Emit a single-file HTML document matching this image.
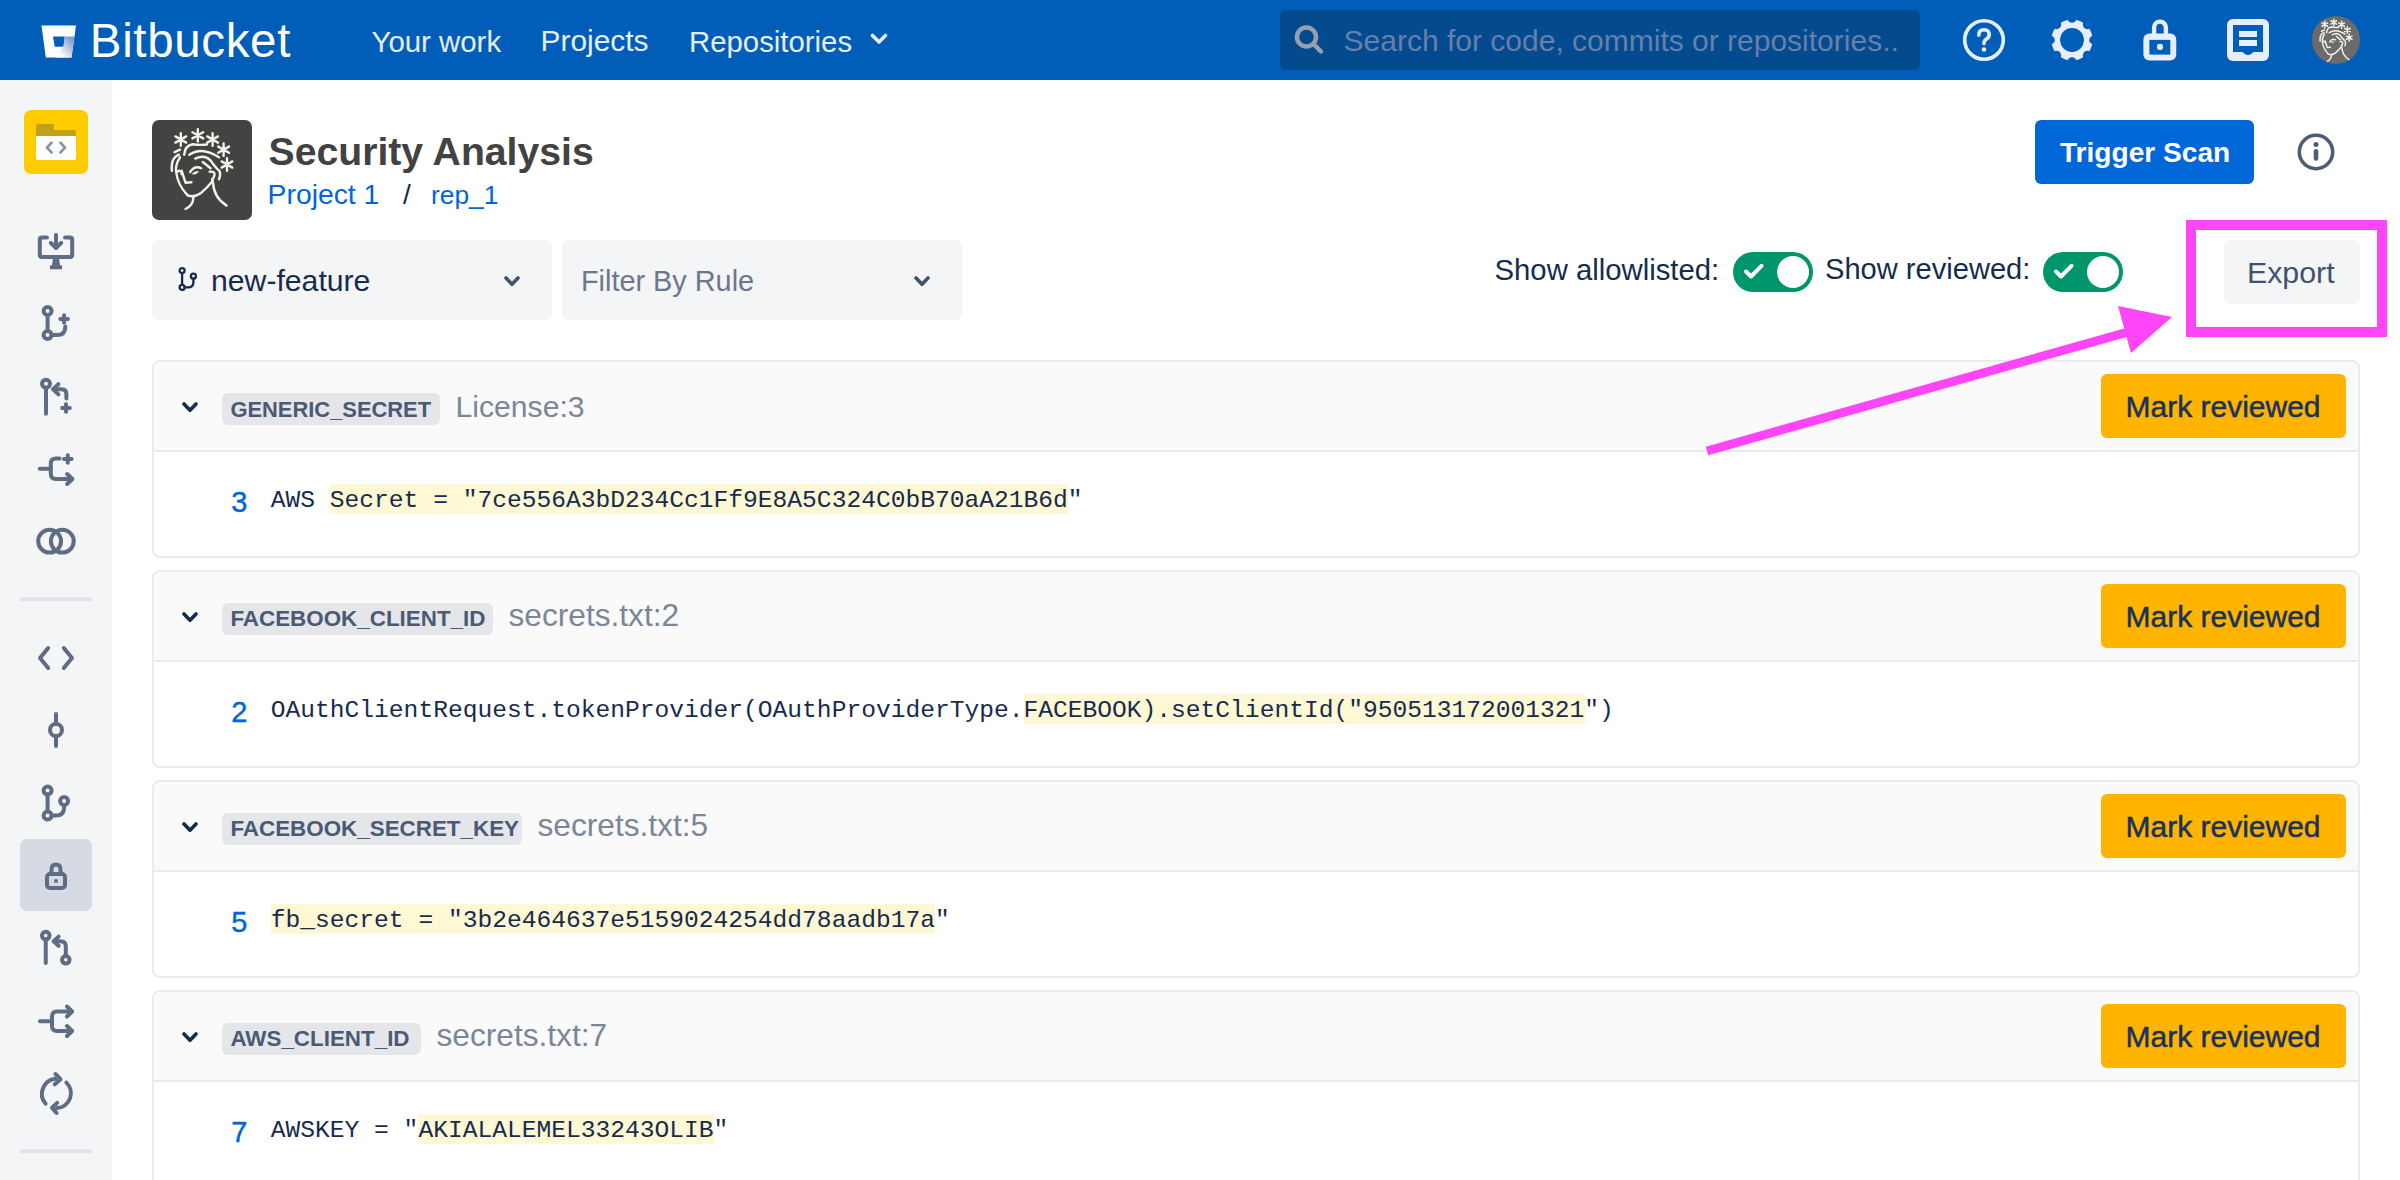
<!DOCTYPE html>
<html><head><meta charset="utf-8"><style>
html,body{margin:0;padding:0;width:2400px;height:1180px;overflow:hidden;background:#fff;position:relative}
.t{position:absolute;white-space:pre;}
.s{font-family:"Liberation Sans", sans-serif;}
.m{font-family:"Liberation Mono", monospace;}
.hl{background:#FFF8D4;padding:5px 0 5px 0;}
</style></head><body>
<div style="position:absolute;left:0;top:0;width:2400px;height:80px;background:#005EB8"></div><svg style="position:absolute;left:41px;top:25px" width="36" height="33" viewBox="0 0 36 33">
<defs><linearGradient id="lg" x1="1" y1="0.25" x2="0.35" y2="0.95"><stop offset="0" stop-color="#7E9DD0"/><stop offset="1" stop-color="#ffffff"/></linearGradient></defs>
<path d="M0.5 0.5 L35 0.5 L30.5 32.5 L4.8 32.5 Z" fill="#fff"/>
<path d="M12 11.5 L23.8 11.5 L22.5 21.8 L13.7 21.8 Z" fill="#005EB8"/>
<path d="M23.8 11.5 L33.4 11.5 L30.5 32.5 L14 32.5 L22.5 21.8 Z" fill="url(#lg)"/>
</svg><div class="t s" style="left:89.8px;top:17.1px;font-size:47.5px;line-height:47.5px;color:#fff;letter-spacing:0.65px;">Bitbucket</div>
<div class="t s" style="left:371.5px;top:26.6px;font-size:29.4px;line-height:29.4px;color:#E6EEFF;">Your work</div>
<div class="t s" style="left:540.5px;top:26.2px;font-size:29.9px;line-height:29.9px;color:#E6EEFF;">Projects</div>
<div class="t s" style="left:689.0px;top:26.6px;font-size:29.35px;line-height:29.35px;color:#E6EEFF;">Repositories</div>
<svg style="position:absolute;left:870px;top:33px" width="18" height="13" viewBox="0 0 18 13"><path d="M2.5 2.5 L9 9 L15.5 2.5" fill="none" stroke="#E6EEFF" stroke-width="3.6" stroke-linecap="round" stroke-linejoin="round"/></svg><div style="position:absolute;left:1280px;top:10px;width:640px;height:60px;background:#034A8E;border-radius:5px"></div><svg style="position:absolute;left:1294px;top:24px" width="32" height="32" viewBox="0 0 32 32"><circle cx="12.5" cy="13" r="9.5" fill="none" stroke="#97A0AF" stroke-width="4.5"/><path d="M19.5 20 L27 27.5" stroke="#97A0AF" stroke-width="4.5" stroke-linecap="round"/></svg><div class="t s" style="left:1343.6px;top:25.9px;font-size:30.0px;line-height:30.0px;color:#6580AB;">Search for code, commits or repositories..</div>
<svg style="position:absolute;left:1962px;top:18px" width="44" height="44" viewBox="0 0 44 44"><circle cx="22" cy="22" r="19.3" fill="none" stroke="#E6EEFF" stroke-width="3.6"/><path d="M16.8 17.2 Q16.8 11.8 22 11.8 Q27.2 11.8 27.2 16.8 Q27.2 19.6 24.2 21.3 Q22 22.6 22 25.6" fill="none" stroke="#E6EEFF" stroke-width="3.6" stroke-linecap="round"/><circle cx="22" cy="31.5" r="2.3" fill="#E6EEFF"/></svg><svg style="position:absolute;left:2051px;top:19px" width="42" height="42" viewBox="0 0 42 42"><defs><mask id="gm"><rect width="42" height="42" fill="white"/><circle cx="42.60" cy="21.00" r="4.4" fill="black"/><circle cx="36.27" cy="36.27" r="4.4" fill="black"/><circle cx="21.00" cy="42.60" r="4.4" fill="black"/><circle cx="5.73" cy="36.27" r="4.4" fill="black"/><circle cx="-0.60" cy="21.00" r="4.4" fill="black"/><circle cx="5.73" cy="5.73" r="4.4" fill="black"/><circle cx="21.00" cy="-0.60" r="4.4" fill="black"/><circle cx="36.27" cy="5.73" r="4.4" fill="black"/><circle cx="21" cy="21" r="11.9" fill="black"/></mask></defs><circle cx="21" cy="21" r="20.6" fill="#E6EEFF" mask="url(#gm)"/></svg><svg style="position:absolute;left:2142px;top:18px" width="36" height="44" viewBox="0 0 36 44"><path d="M12.1 17 V9.5 A5.9 5.9 0 0 1 23.9 9.5 V17" fill="none" stroke="#E6EEFF" stroke-width="4.4"/><rect x="1.4" y="15.4" width="32.85" height="27.2" rx="6" fill="#E6EEFF"/><rect x="7.4" y="21.9" width="20.9" height="14.7" fill="#005EB8"/><circle cx="18" cy="28.9" r="3.1" fill="#E6EEFF"/></svg><svg style="position:absolute;left:2227px;top:19px" width="42" height="42" viewBox="0 0 42 42"><rect x="0" y="0" width="42" height="42" rx="6" fill="#E6EEFF"/><path d="M6 6 H36 V33 H26.5 Q21 39.5 15.5 33 H6 Z" fill="#005EB8"/><rect x="12" y="12" width="18" height="6" fill="#E6EEFF"/><rect x="12" y="21" width="18" height="6" fill="#E6EEFF"/></svg><svg style="position:absolute;left:2312px;top:16px" width="48" height="48" viewBox="0 0 100 100"><circle cx="50" cy="50" r="50" fill="#6B6B6B"/><g transform="translate(-5,-3.5) scale(1.1)"><path d="M28.80 13.30 L28.80 25.70 M34.17 16.40 L23.43 22.60 M34.17 22.60 L23.43 16.40 " stroke="#F4F1E8" stroke-width="2.8" stroke-linecap="round"/><path d="M45.80 9.10 L45.80 21.50 M51.17 12.20 L40.43 18.40 M51.17 18.40 L40.43 12.20 " stroke="#F4F1E8" stroke-width="2.8" stroke-linecap="round"/><path d="M60.60 13.30 L60.60 25.70 M65.97 16.40 L55.23 22.60 M65.97 22.60 L55.23 16.40 " stroke="#F4F1E8" stroke-width="2.8" stroke-linecap="round"/><path d="M71.60 23.50 L71.60 35.90 M76.97 26.60 L66.23 32.80 M76.97 32.80 L66.23 26.60 " stroke="#F4F1E8" stroke-width="2.8" stroke-linecap="round"/><path d="M75.00 38.30 L75.00 50.70 M80.37 41.40 L69.63 47.60 M80.37 47.60 L69.63 41.40 " stroke="#F4F1E8" stroke-width="2.8" stroke-linecap="round"/><g fill="none" stroke="#F4F1E8" stroke-width="2.8" stroke-linecap="round" stroke-linejoin="round"><path d="M22.5 32.2 L28 29.7"/>
<path d="M19.9 50.8 Q18.5 38 27 34.7"/>
<path d="M28 37.3 Q23 45 24.2 52 Q25.4 64.4 35.6 75.4 Q42 78 49 73 Q55 68 61 60.5"/>
<path d="M32.2 34.7 Q33 25.4 40.7 24.2 Q47.5 25.4 55 24.5"/>
<path d="M37.3 34.7 Q50 26 67 37.3"/>
<path d="M43.2 38.6 Q55 33 61 44 Q66 50 67.5 51 Q69 55 67 59.3"/>
<path d="M50.8 42 L58.5 48.3"/>
<path d="M57.6 51.7 Q63 51 62.5 55 Q62 58 60 59.5"/>
<path d="M38.1 52 Q43 45 49.2 48.3"/>
<path d="M25.4 51.7 Q29 49 29.7 54.2"/>
<path d="M29.7 50.8 L33.5 62.7 L39.4 62.3"/>
<path d="M41.5 77.1 Q41 85.6 33.5 89"/>
<path d="M61 62.7 Q62 78 74.6 85.6"/></g><path d="M39.5 54 Q44 50 47 51.5 Q44 55.5 39.5 54 Z" fill="#F4F1E8"/></g></svg><div style="position:absolute;left:0;top:80px;width:112px;height:1100px;background:#F4F5F7"></div><div style="position:absolute;left:24px;top:110px;width:64px;height:64px;background:#FFCC00;border-radius:7px"></div><svg style="position:absolute;left:36px;top:124px" width="40" height="36" viewBox="0 0 40 36"><path d="M0 2 Q0 0 2 0 H17 Q18 0 18 1 V6 H38 Q40 6 40 8 V13 H0 Z" fill="#C2A11A"/><path d="M0 12 H40 V34 Q40 36 38 36 H2 Q0 36 0 34 Z" fill="#fff"/><path d="M15.5 18.8 L11 23.6 L15.5 28.4 M24.5 18.8 L29 23.6 L24.5 28.4" fill="none" stroke="#8A94A5" stroke-width="2.8" stroke-linecap="round" stroke-linejoin="round"/></svg><svg style="position:absolute;left:36px;top:231px" width="40" height="40" viewBox="0 0 40 40"><g fill="none" stroke="#5E6C84" stroke-width="4" stroke-linecap="round" stroke-linejoin="round"><path d="M11 6.4 H6 Q3.8 6.4 3.8 8.6 V23.8 Q3.8 26 6 26 H34 Q36.2 26 36.2 23.8 V8.6 Q36.2 6.4 34 6.4 H29"/><path d="M20 4 V16.5 M14.8 11.8 L20 17 L25.2 11.8"/><path d="M17 27 H23 L24 34.2 H26 V38.2 H14 V34.2 H16 Z" fill="#5E6C84" stroke="none"/></g></svg><svg style="position:absolute;left:40px;top:303px" width="34" height="40" viewBox="0 0 34 40"><g fill="none" stroke="#5E6C84" stroke-width="4" stroke-linecap="round" stroke-linejoin="round"><circle cx="7.6" cy="8" r="4"/><circle cx="7.6" cy="32" r="4"/><path d="M7.6 12 V28"/><path d="M11.6 32 H17 Q25.3 32 25.3 24 V23.5"/><path d="M24.1 12.2 V19.8 M20.3 16 H27.9"/></g></svg><svg style="position:absolute;left:38px;top:376px" width="36" height="40" viewBox="0 0 36 40"><g fill="none" stroke="#5E6C84" stroke-width="4" stroke-linecap="round" stroke-linejoin="round"><circle cx="8" cy="7.8" r="4"/><path d="M8 11.8 V37.8"/><path d="M20.4 8.2 L15.2 13.3 L20.4 18.4"/><path d="M15.2 13.3 H23.5 Q28.4 13.3 28.4 18.2 V22.5"/><path d="M28 28.2 V35.8 M24.2 32 H31.8"/></g></svg><svg style="position:absolute;left:36px;top:451px" width="40" height="36" viewBox="0 0 40 36"><g fill="none" stroke="#5E6C84" stroke-width="4" stroke-linecap="round" stroke-linejoin="round"><path d="M3.8 17.8 H14.8"/><path d="M23.5 7.5 H20 Q14.8 7.5 14.8 12.7 V22.8 Q14.8 28 20 28 H36.3"/><path d="M31.2 23 L36.3 28 L31.2 33"/><path d="M31.8 4.2 V11.8 M28 8 H35.6"/></g></svg><svg style="position:absolute;left:34px;top:525px" width="44" height="32" viewBox="0 0 44 32"><g fill="none" stroke="#5E6C84" stroke-width="4" stroke-linecap="round" stroke-linejoin="round"><circle cx="15.6" cy="16.2" r="11.4"/><circle cx="28.3" cy="16.2" r="11.4"/></g></svg><div style="position:absolute;left:20px;top:597px;width:72px;height:4px;background:#E2E4E9"></div><svg style="position:absolute;left:36px;top:644px" width="40" height="28" viewBox="0 0 40 28"><g fill="none" stroke="#5E6C84" stroke-width="4" stroke-linecap="round" stroke-linejoin="round"><path d="M12.2 4 L4 14 L12.2 24 M27.8 4 L36 14 L27.8 24"/></g></svg><svg style="position:absolute;left:46px;top:710px" width="20" height="40" viewBox="0 0 20 40"><g fill="none" stroke="#5E6C84" stroke-width="4" stroke-linecap="round" stroke-linejoin="round"><circle cx="10" cy="20" r="6"/><path d="M10 4 V14 M10 26 V36"/></g></svg><svg style="position:absolute;left:40px;top:783px" width="32" height="40" viewBox="0 0 32 40"><g fill="none" stroke="#5E6C84" stroke-width="4" stroke-linecap="round" stroke-linejoin="round"><circle cx="7.6" cy="7.6" r="4"/><circle cx="7.6" cy="32.4" r="4"/><circle cx="24.1" cy="18" r="4"/><path d="M7.6 11.6 V28.4"/><path d="M11.6 32.4 H16 Q24.1 32.4 24.1 24.4 V22"/></g></svg><div style="position:absolute;left:20px;top:839px;width:72px;height:72px;background:#D5DAE3;border-radius:7px"></div><svg style="position:absolute;left:44px;top:861px" width="24" height="30" viewBox="0 0 24 30"><g fill="none" stroke="#5E6C84" stroke-width="4" stroke-linecap="round" stroke-linejoin="round"><path d="M7.5 12 V8.5 Q7.5 3.5 12 3.5 Q16.5 3.5 16.5 8.5 V12"/><rect x="3" y="13" width="18" height="14" rx="3"/><circle cx="12" cy="20" r="2" fill="#5E6C84" stroke="none"/></g></svg><svg style="position:absolute;left:38px;top:929px" width="36" height="40" viewBox="0 0 36 40"><g fill="none" stroke="#5E6C84" stroke-width="4" stroke-linecap="round" stroke-linejoin="round"><circle cx="7.75" cy="6.6" r="3.8"/><path d="M7.75 10.4 V34"/><path d="M20.6 7.6 L15.7 12.2 L20.6 16.8"/><path d="M15.7 12.2 H22.5 Q27.8 12.2 27.8 17.3 V27"/><circle cx="27.8" cy="30.8" r="3.8"/></g></svg><svg style="position:absolute;left:36px;top:1003px" width="40" height="36" viewBox="0 0 40 36"><g fill="none" stroke="#5E6C84" stroke-width="4" stroke-linecap="round" stroke-linejoin="round"><path d="M4 18.2 H14.3"/><path d="M36 8.5 H21 Q16 8.5 16 13.5 V23 Q16 28 21 28 H36"/><path d="M31 3.5 L36 8.5 L31 13.5 M31 23 L36 28 L31 33"/></g></svg><svg style="position:absolute;left:36px;top:1071px" width="40" height="46" viewBox="0 0 40 46"><g fill="none" stroke="#5E6C84" stroke-width="4" stroke-linecap="round" stroke-linejoin="round"><path d="M9.6 32.8 A15.2 15.2 0 0 1 19.4 7.8"/><path d="M19.4 3 L24.5 8.2 L18.8 13.3"/><path d="M30.4 11.6 A14.8 14.8 0 0 1 21.1 37"/><path d="M21.1 31.9 L16 36.6 L20.6 42"/></g></svg><div style="position:absolute;left:20px;top:1149px;width:72px;height:4px;background:#E2E4E9"></div><svg style="position:absolute;left:152px;top:120px" width="100" height="100" viewBox="0 0 100 100"><rect width="100" height="100" rx="7" fill="#434343"/><path d="M28.80 13.30 L28.80 25.70 M34.17 16.40 L23.43 22.60 M34.17 22.60 L23.43 16.40 " stroke="#F4F1E8" stroke-width="2.4" stroke-linecap="round"/><path d="M45.80 9.10 L45.80 21.50 M51.17 12.20 L40.43 18.40 M51.17 18.40 L40.43 12.20 " stroke="#F4F1E8" stroke-width="2.4" stroke-linecap="round"/><path d="M60.60 13.30 L60.60 25.70 M65.97 16.40 L55.23 22.60 M65.97 22.60 L55.23 16.40 " stroke="#F4F1E8" stroke-width="2.4" stroke-linecap="round"/><path d="M71.60 23.50 L71.60 35.90 M76.97 26.60 L66.23 32.80 M76.97 32.80 L66.23 26.60 " stroke="#F4F1E8" stroke-width="2.4" stroke-linecap="round"/><path d="M75.00 38.30 L75.00 50.70 M80.37 41.40 L69.63 47.60 M80.37 47.60 L69.63 41.40 " stroke="#F4F1E8" stroke-width="2.4" stroke-linecap="round"/><g fill="none" stroke="#F4F1E8" stroke-width="2.4" stroke-linecap="round" stroke-linejoin="round"><path d="M22.5 32.2 L28 29.7"/>
<path d="M19.9 50.8 Q18.5 38 27 34.7"/>
<path d="M28 37.3 Q23 45 24.2 52 Q25.4 64.4 35.6 75.4 Q42 78 49 73 Q55 68 61 60.5"/>
<path d="M32.2 34.7 Q33 25.4 40.7 24.2 Q47.5 25.4 55 24.5"/>
<path d="M37.3 34.7 Q50 26 67 37.3"/>
<path d="M43.2 38.6 Q55 33 61 44 Q66 50 67.5 51 Q69 55 67 59.3"/>
<path d="M50.8 42 L58.5 48.3"/>
<path d="M57.6 51.7 Q63 51 62.5 55 Q62 58 60 59.5"/>
<path d="M38.1 52 Q43 45 49.2 48.3"/>
<path d="M25.4 51.7 Q29 49 29.7 54.2"/>
<path d="M29.7 50.8 L33.5 62.7 L39.4 62.3"/>
<path d="M41.5 77.1 Q41 85.6 33.5 89"/>
<path d="M61 62.7 Q62 78 74.6 85.6"/></g><path d="M39.5 54 Q44 50 47 51.5 Q44 55.5 39.5 54 Z" fill="#F4F1E8"/></svg><div class="t s" style="left:268.5px;top:131.8px;font-size:39.2px;line-height:39.2px;color:#424242;font-weight:700;">Security Analysis</div>
<div class="t s" style="left:267.6px;top:180.4px;font-size:28.3px;line-height:28.3px;color:#0065D6;">Project 1</div>
<div class="t s" style="left:403.0px;top:180.7px;font-size:28px;line-height:28px;color:#172B4D;">/</div>
<div class="t s" style="left:431.0px;top:182.1px;font-size:26.3px;line-height:26.3px;color:#0065D6;">rep_1</div>
<div style="position:absolute;left:2035px;top:120px;width:219px;height:64px;background:#0067D8;border-radius:6px"></div><div class="t s" style="left:2060.0px;top:139.3px;font-size:28.1px;line-height:28.1px;color:#fff;font-weight:700;">Trigger Scan</div>
<svg style="position:absolute;left:2296px;top:132px" width="40" height="40" viewBox="0 0 40 40"><circle cx="20" cy="20" r="16.7" fill="none" stroke="#4E5C76" stroke-width="3.6"/><circle cx="20" cy="12.6" r="2.5" fill="#4E5C76"/><path d="M20 19.2 V26.5" stroke="#4E5C76" stroke-width="4.6" stroke-linecap="round"/></svg><div style="position:absolute;left:152px;top:240px;width:400px;height:80px;background:#F4F5F7;border-radius:6px"></div><svg style="position:absolute;left:176px;top:265px" width="24" height="28" viewBox="0 0 24 28"><g fill="none" stroke="#172B4D" stroke-width="2.3" stroke-linecap="round"><circle cx="6.1" cy="5.6" r="2.5"/><circle cx="6.1" cy="22.4" r="2.5"/><circle cx="17.4" cy="11.2" r="2.5"/><path d="M6.1 8.1 V19.9"/><path d="M8.6 22.4 H12 Q17.4 22.4 17.4 17 V13.7"/></g></svg><div class="t s" style="left:211.0px;top:266.0px;font-size:30.2px;line-height:30.2px;color:#172B4D;">new-feature</div>
<svg style="position:absolute;left:504px;top:276px" width="16" height="11" viewBox="0 0 16 11"><path d="M2 2 L8 8.3 L14 2" fill="none" stroke="#42526E" stroke-width="3.6" stroke-linecap="round" stroke-linejoin="round"/></svg><div style="position:absolute;left:562px;top:240px;width:400px;height:80px;background:#F4F5F7;border-radius:6px"></div><div class="t s" style="left:581.0px;top:266.6px;font-size:28.85px;line-height:28.85px;color:#6B778C;">Filter By Rule</div>
<svg style="position:absolute;left:914px;top:276px" width="16" height="11" viewBox="0 0 16 11"><path d="M2 2 L8 8.3 L14 2" fill="none" stroke="#42526E" stroke-width="3.6" stroke-linecap="round" stroke-linejoin="round"/></svg><div class="t s" style="left:1494.5px;top:255.2px;font-size:29.3px;line-height:29.3px;color:#172B4D;">Show allowlisted:</div>
<svg style="position:absolute;left:1733px;top:252px" width="80" height="40" viewBox="0 0 80 40"><rect width="80" height="40" rx="20" fill="#00966B"/><circle cx="60" cy="20" r="16" fill="#fff"/><path d="M13 19.5 L18 24.5 L28.5 13.8" fill="none" stroke="#fff" stroke-width="4" stroke-linecap="round" stroke-linejoin="round"/></svg><div class="t s" style="left:1825.0px;top:255.4px;font-size:29.1px;line-height:29.1px;color:#172B4D;">Show reviewed:</div>
<svg style="position:absolute;left:2043px;top:252px" width="80" height="40" viewBox="0 0 80 40"><rect width="80" height="40" rx="20" fill="#00966B"/><circle cx="60" cy="20" r="16" fill="#fff"/><path d="M13 19.5 L18 24.5 L28.5 13.8" fill="none" stroke="#fff" stroke-width="4" stroke-linecap="round" stroke-linejoin="round"/></svg><div style="position:absolute;left:2224px;top:240px;width:136px;height:64px;background:#F4F5F7;border-radius:6px"></div><div class="t s" style="left:2247.0px;top:257.7px;font-size:30.3px;line-height:30.3px;color:#42526E;">Export</div>
<div style="position:absolute;left:152px;top:360px;width:2204px;height:194px;border:2px solid #EBEBEB;border-radius:8px;background:#fff;overflow:hidden"><div style="position:absolute;left:0;top:0;width:100%;height:88px;background:#FAFAFA;border-bottom:2px solid #EBEBEB"></div></div><svg style="position:absolute;left:182px;top:402px" width="16" height="11" viewBox="0 0 16 11"><path d="M2 2 L8 8.3 L14 2" fill="none" stroke="#172B4D" stroke-width="3.6" stroke-linecap="round" stroke-linejoin="round"/></svg><div style="position:absolute;left:222px;top:393px;width:218px;height:32px;background:#E4E6EA;border-radius:6px"></div><div class="t s" style="left:230.4px;top:398.5px;font-size:21.9px;line-height:21.9px;color:#4A5A75;font-weight:700;">GENERIC_SECRET</div>
<div class="t s" style="left:455.5px;top:391.5px;font-size:30.157600000000002px;line-height:30.157600000000002px;color:#7A869A;">License:3</div>
<div style="position:absolute;left:2101px;top:374px;width:245px;height:64px;background:#FFB400;border-radius:6px"></div><div class="t s" style="left:2125.5px;top:391.6px;font-size:30.0px;line-height:30.0px;color:#1A3158;-webkit-text-stroke:0.5px #1A3158;">Mark reviewed</div>
<div class="t s" style="left:231.3px;top:488.4px;font-size:29px;line-height:29px;color:#0065D6;-webkit-text-stroke:0.4px #0065D6;">3</div>
<div style="position:absolute;left:329.8px;top:484.2px;width:738.1px;height:29.5px;background:#FFF8D4"></div><div class="t m" style="left:270.8px;top:489.4px;font-size:24.6px;line-height:24.6px;color:#172B4D;">AWS Secret = "7ce556A3bD234Cc1Ff9E8A5C324C0bB70aA21B6d"</div>
<div style="position:absolute;left:152px;top:570px;width:2204px;height:194px;border:2px solid #EBEBEB;border-radius:8px;background:#fff;overflow:hidden"><div style="position:absolute;left:0;top:0;width:100%;height:88px;background:#FAFAFA;border-bottom:2px solid #EBEBEB"></div></div><svg style="position:absolute;left:182px;top:612px" width="16" height="11" viewBox="0 0 16 11"><path d="M2 2 L8 8.3 L14 2" fill="none" stroke="#172B4D" stroke-width="3.6" stroke-linecap="round" stroke-linejoin="round"/></svg><div style="position:absolute;left:222px;top:603px;width:271px;height:32px;background:#E4E6EA;border-radius:6px"></div><div class="t s" style="left:230.4px;top:608.0px;font-size:22.4px;line-height:22.4px;color:#4A5A75;font-weight:700;">FACEBOOK_CLIENT_ID</div>
<div class="t s" style="left:508.5px;top:600.2px;font-size:31.6756px;line-height:31.6756px;color:#7A869A;">secrets.txt:2</div>
<div style="position:absolute;left:2101px;top:584px;width:245px;height:64px;background:#FFB400;border-radius:6px"></div><div class="t s" style="left:2125.5px;top:601.6px;font-size:30.0px;line-height:30.0px;color:#1A3158;-webkit-text-stroke:0.5px #1A3158;">Mark reviewed</div>
<div class="t s" style="left:231.3px;top:698.4px;font-size:29px;line-height:29px;color:#0065D6;-webkit-text-stroke:0.4px #0065D6;">2</div>
<div style="position:absolute;left:1023.7px;top:694.2px;width:561.0px;height:29.5px;background:#FFF8D4"></div><div class="t m" style="left:270.8px;top:699.4px;font-size:24.6px;line-height:24.6px;color:#172B4D;">OAuthClientRequest.tokenProvider(OAuthProviderType.FACEBOOK).setClientId("950513172001321")</div>
<div style="position:absolute;left:152px;top:780px;width:2204px;height:194px;border:2px solid #EBEBEB;border-radius:8px;background:#fff;overflow:hidden"><div style="position:absolute;left:0;top:0;width:100%;height:88px;background:#FAFAFA;border-bottom:2px solid #EBEBEB"></div></div><svg style="position:absolute;left:182px;top:822px" width="16" height="11" viewBox="0 0 16 11"><path d="M2 2 L8 8.3 L14 2" fill="none" stroke="#172B4D" stroke-width="3.6" stroke-linecap="round" stroke-linejoin="round"/></svg><div style="position:absolute;left:222px;top:813px;width:300px;height:32px;background:#E4E6EA;border-radius:6px"></div><div class="t s" style="left:230.4px;top:818.0px;font-size:22.4px;line-height:22.4px;color:#4A5A75;font-weight:700;">FACEBOOK_SECRET_KEY</div>
<div class="t s" style="left:537.5px;top:810.2px;font-size:31.6756px;line-height:31.6756px;color:#7A869A;">secrets.txt:5</div>
<div style="position:absolute;left:2101px;top:794px;width:245px;height:64px;background:#FFB400;border-radius:6px"></div><div class="t s" style="left:2125.5px;top:811.6px;font-size:30.0px;line-height:30.0px;color:#1A3158;-webkit-text-stroke:0.5px #1A3158;">Mark reviewed</div>
<div class="t s" style="left:231.3px;top:908.4px;font-size:29px;line-height:29px;color:#0065D6;-webkit-text-stroke:0.4px #0065D6;">5</div>
<div style="position:absolute;left:270.8px;top:904.2px;width:664.3px;height:29.5px;background:#FFF8D4"></div><div class="t m" style="left:270.8px;top:909.4px;font-size:24.6px;line-height:24.6px;color:#172B4D;">fb_secret = "3b2e464637e5159024254dd78aadb17a"</div>
<div style="position:absolute;left:152px;top:990px;width:2204px;height:194px;border:2px solid #EBEBEB;border-radius:8px;background:#fff;overflow:hidden"><div style="position:absolute;left:0;top:0;width:100%;height:88px;background:#FAFAFA;border-bottom:2px solid #EBEBEB"></div></div><svg style="position:absolute;left:182px;top:1032px" width="16" height="11" viewBox="0 0 16 11"><path d="M2 2 L8 8.3 L14 2" fill="none" stroke="#172B4D" stroke-width="3.6" stroke-linecap="round" stroke-linejoin="round"/></svg><div style="position:absolute;left:222px;top:1023px;width:199px;height:32px;background:#E4E6EA;border-radius:6px"></div><div class="t s" style="left:230.4px;top:1028.0px;font-size:22.4px;line-height:22.4px;color:#4A5A75;font-weight:700;">AWS_CLIENT_ID</div>
<div class="t s" style="left:436.5px;top:1020.2px;font-size:31.6756px;line-height:31.6756px;color:#7A869A;">secrets.txt:7</div>
<div style="position:absolute;left:2101px;top:1004px;width:245px;height:64px;background:#FFB400;border-radius:6px"></div><div class="t s" style="left:2125.5px;top:1021.6px;font-size:30.0px;line-height:30.0px;color:#1A3158;-webkit-text-stroke:0.5px #1A3158;">Mark reviewed</div>
<div class="t s" style="left:231.3px;top:1118.4px;font-size:29px;line-height:29px;color:#0065D6;-webkit-text-stroke:0.4px #0065D6;">7</div>
<div style="position:absolute;left:418.4px;top:1114.2px;width:295.2px;height:29.5px;background:#FFF8D4"></div><div class="t m" style="left:270.8px;top:1119.4px;font-size:24.6px;line-height:24.6px;color:#172B4D;">AWSKEY = "AKIALALEMEL33243OLIB"</div>
<div style="position:absolute;left:2186px;top:220px;width:181px;height:97px;border:10px solid #FF45F8"></div><svg style="position:absolute;left:1690px;top:290px" width="500" height="180" viewBox="1690 290 500 180"><path d="M1707 451 L2128 332" stroke="#FF45F8" stroke-width="9"/><polygon points="2172,317 2118,306 2131,353" fill="#FF45F8"/></svg>
</body></html>
